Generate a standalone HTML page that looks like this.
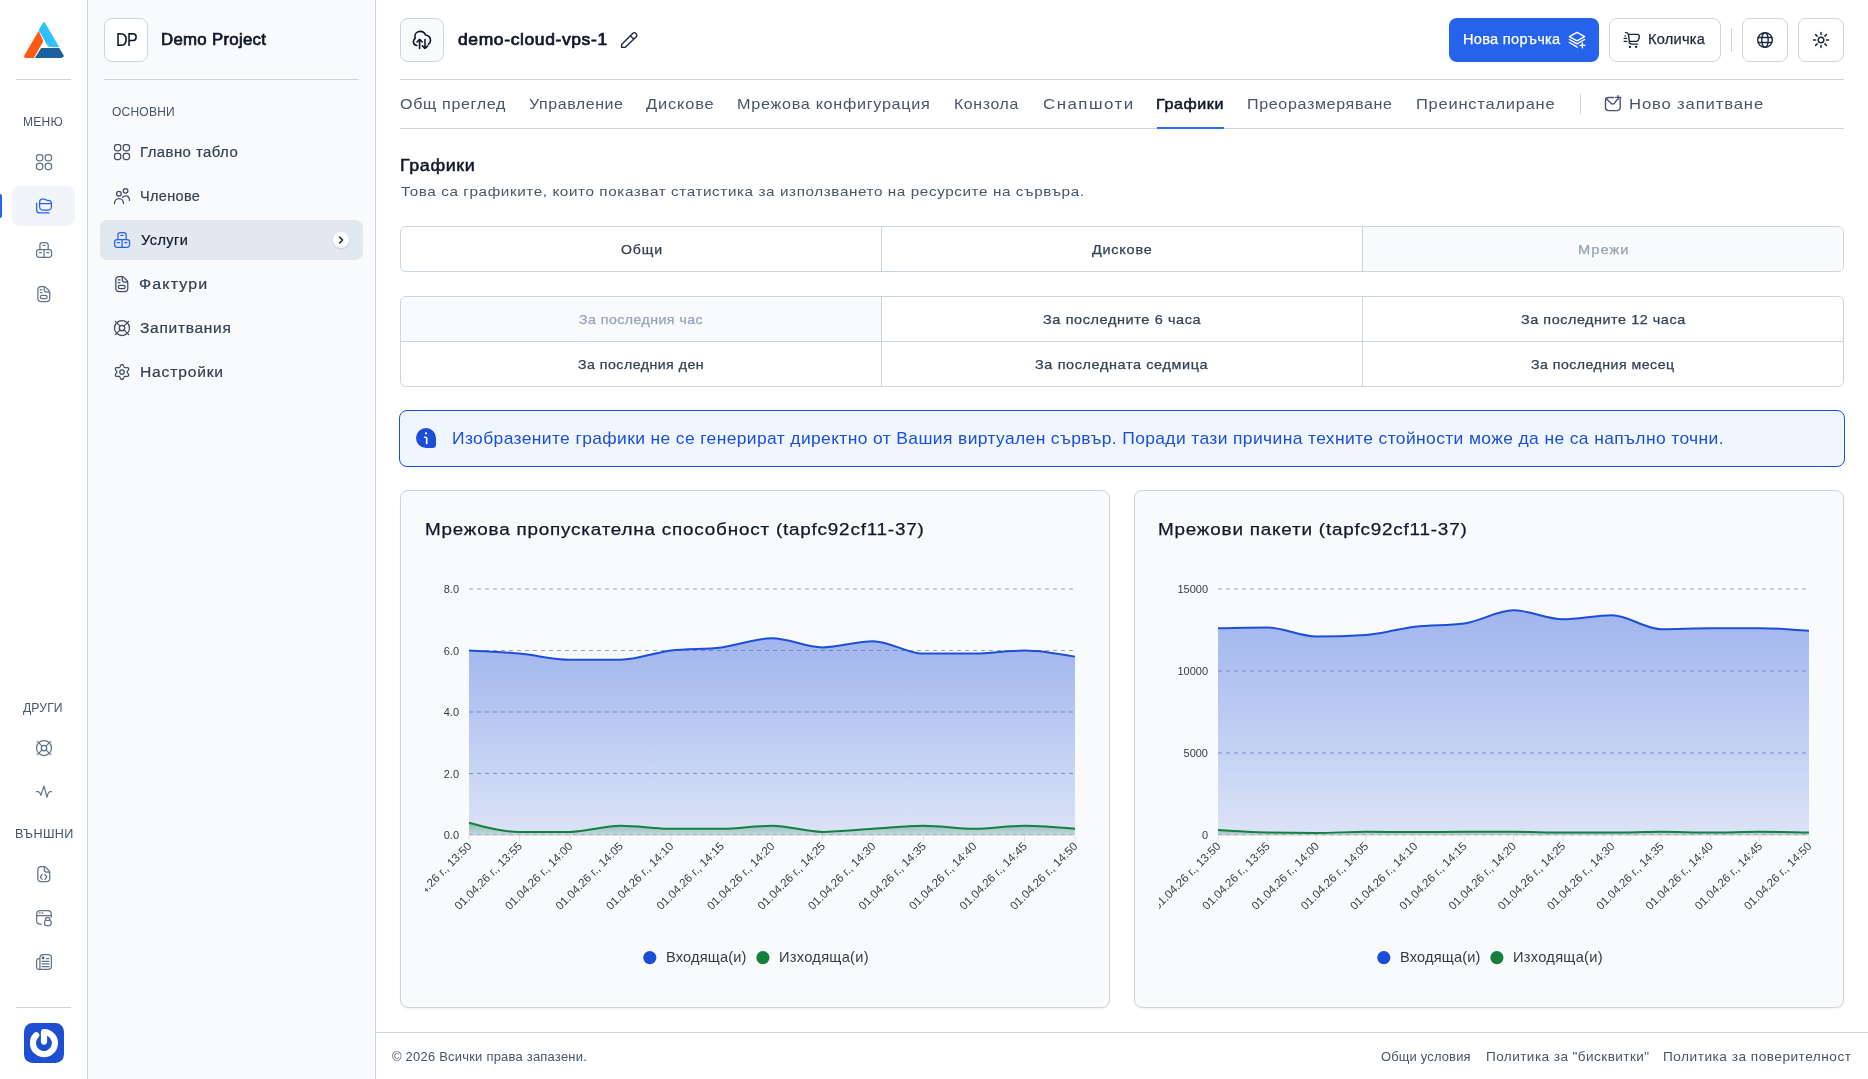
<!DOCTYPE html>
<html lang="bg">
<head>
<meta charset="utf-8">
<title>demo-cloud-vps-1 - Графики</title>
<style>
*{box-sizing:border-box;margin:0;padding:0}
html,body{width:1868px;height:1079px;overflow:hidden;background:#fff}
body{font-family:"Liberation Sans",sans-serif;color:#334155;position:relative;font-size:15px}
.abs{position:absolute}
svg{display:block}
.ic{fill:none;stroke:#475569;stroke-width:1.5;stroke-linecap:round;stroke-linejoin:round}
#texts{position:absolute;left:0;top:0;width:1868px;height:1079px;will-change:transform}
.t{position:absolute;white-space:pre;line-height:1;transform-origin:0 50%}

/* rail */
#rail{position:absolute;left:0;top:0;width:88px;height:1079px;background:#fff;border-right:1px solid #cbd5e1}
.rdiv{position:absolute;left:16px;width:55px;height:1px;background:#cbd5e1}
.rlabel{position:absolute;left:0;width:87px;text-align:center;font-size:12px;color:#475569;line-height:14px;letter-spacing:.2px}
.ricon{position:absolute;left:33.5px;width:20px;height:20px}
.ractive{position:absolute;left:12px;top:186px;width:63px;height:40px;background:#f1f5f9;border-radius:8px}
.rbar{position:absolute;left:0;top:194px;width:2px;height:24px;background:#2563eb;border-radius:0 2px 2px 0}

/* sidebar */
#side{position:absolute;left:88px;top:0;width:288px;height:1079px;background:#f8fafc;border-right:1px solid #cbd5e1}
.sitem{position:absolute;left:12px;width:263px;height:40px;border-radius:8px}
.sitem svg{position:absolute;left:12px;top:10px;width:20px;height:20px}
.sitem span{position:absolute;left:40px;top:0;line-height:40px;font-size:15px;color:#334155;white-space:nowrap}

/* main */
#main{position:absolute;left:376px;top:0;width:1492px;height:1079px;background:#fff}
.box44{position:absolute;width:44px;height:44px;border:1px solid #cbd5e1;border-radius:8px;background:#fff}
.hdiv{position:absolute;height:1px;background:#cbd5e1}
.tab{position:absolute;top:94px;font-size:16px;line-height:20px;color:#475569;white-space:nowrap}
.seg{position:absolute;border:1px solid #cbd5e1;border-radius:6px;background:#fff;overflow:hidden}
.seg div{position:absolute;text-align:center;font-size:14px;color:#334155;font-weight:500;white-space:nowrap}
.card{position:absolute;top:490px;width:710px;height:518px;background:#f8fafc;border:1px solid #cbd5e1;border-radius:8px;box-shadow:0 1px 2px rgba(15,23,42,.05)}
.ctitle{position:absolute;left:24px;top:27px;font-size:18px;line-height:22px;color:#0f172a;white-space:nowrap}
.foot{position:absolute;top:1049px;font-size:13px;line-height:16px;color:#475569;white-space:nowrap}
</style>
</head>
<body>

<!-- ================= ICON RAIL ================= -->
<div id="rail">
  <svg class="abs" style="left:19px;top:15px;width:50px;height:50px" viewBox="0 0 50 50">
<path d="M19.7 15.8 L24 25.6 Q24.3 26.5 23.8 27.3 L14.8 42.9 L7 42.9 Q4.4 42.7 5.3 40.4 Z" fill="#ff5a12"/>
<path d="M24.2 7.6 Q25 6.4 25.8 7.6 L40.3 32.3 L31 31.9 Q29 31.8 28.2 30.2 L20 15.6 Q19.7 14.8 20.1 14.2 Z" fill="#2ec0ff"/>
<path d="M22.2 33 L40.3 33 L44.6 40.3 Q45.2 41.4 44.2 42.1 Q43.4 42.9 42.5 42.9 L15.8 42.9 Z" fill="#1c619e"/>
</svg>
  <div class="rdiv" style="top:79px"></div>
  <div class="ractive"></div><div class="rbar"></div>
  <svg class="ricon ic" style="top:152px;stroke:#64748b" viewBox="0 0 24 24"><rect x="3" y="3" width="7.5" height="7.5" rx="2.6"/><rect x="13.5" y="3" width="7.5" height="7.5" rx="2.6"/><rect x="3" y="13.5" width="7.5" height="7.5" rx="2.6"/><rect x="13.5" y="13.5" width="7.5" height="7.5" rx="2.6"/></svg>
<svg class="ricon ic" style="top:196px;stroke:#2563eb" viewBox="0 0 24 24"><path d="M3.2 8.5 V16.7 a3.6 3.6 0 0 0 3.6 3.6 H18"/><path d="M6.7 9 H20.9"/><path d="M6.7 7.4 a3.6 3.6 0 0 1 3.6 -3.6 h2.1 c1.5 0 2.1 1.4 3.6 1.4 h1.4 a3.5 3.5 0 0 1 3.5 3.5 V13.3 a3.5 3.5 0 0 1 -3.5 3.5 H10.2 a3.5 3.5 0 0 1 -3.5 -3.5 Z"/></svg>
<svg class="ricon ic" style="top:240px;stroke:#64748b" viewBox="0 0 24 24"><path d="M7.1 11.5 V6.1 a3 3 0 0 1 3 -3 h3.9 a3 3 0 0 1 3 3 V11.5"/><rect x="3.1" y="11.5" width="18" height="9.3" rx="3"/><path d="M12.1 11.5 V20.8 M10.8 6.5 h2.5 M6.4 15 h2.5 M15.4 15 h2.5"/></svg>
<svg class="ricon ic" style="top:284px;stroke:#64748b" viewBox="0 0 24 24"><path d="M4.6 7 a4 4 0 0 1 4 -4 h3 c1 0 1.8 .4 2.5 1.1 l3.7 3.7 c.7 .7 1.1 1.5 1.1 2.5 V17 a4 4 0 0 1 -4 4 H8.6 a4 4 0 0 1 -4 -4 Z"/><path d="M12.4 3.3 V7.3 a2.5 2.5 0 0 0 2.5 2.5 h3.7"/><path d="M7.4 7.1 h2.2 M7.4 10.3 h2.2"/><rect x="7.7" y="13.6" width="8" height="4" rx="1.6"/></svg>
<svg class="ricon ic" style="top:738px;stroke:#64748b" viewBox="0 0 24 24"><circle cx="12" cy="12" r="9"/><circle cx="12" cy="12" r="3.3"/><path d="M4 4 L9.7 9.7 M20 4 L14.3 9.7 M4 20 L9.7 14.3 M20 20 L14.3 14.3"/></svg>
<svg class="ricon ic" style="top:782px;stroke:#64748b" viewBox="0 0 24 24"><path d="M3 11.5 h1.8 c1.6 0 2.3 1 2.7 2.5 l.7 2.1 L12 5 l3.6 13.5 l1 -4 c.5 -1.8 1.2 -3 2.8 -3 h1.5"/></svg>
<svg class="ricon ic" style="top:864px;stroke:#64748b" viewBox="0 0 24 24"><path d="M4.6 7 a4 4 0 0 1 4 -4 h3 c1 0 1.8 .4 2.5 1.1 l3.7 3.7 c.7 .7 1.1 1.5 1.1 2.5 V17 a4 4 0 0 1 -4 4 H8.6 a4 4 0 0 1 -4 -4 Z"/><path d="M12.4 3.3 V7.3 a2.5 2.5 0 0 0 2.5 2.5 h3.7"/><path d="M9.7 12.6 L7.5 15.5 L9.7 18.4 M13.1 12.6 L15.5 15.5 L13.1 18.4"/></svg>
<svg class="ricon ic" style="top:908px;stroke:#64748b" viewBox="0 0 24 24"><path d="M8.9 19.3 H7.2 a4 4 0 0 1 -4 -4 V7.1 a4 4 0 0 1 4 -4 H16.7 a4 4 0 0 1 4 4 V10.8"/><path d="M3.2 9 H20.7"/><path d="M6.7 6 h.5 M9.9 6 h.5" stroke-width="1.9"/><rect x="12.6" y="14.8" width="8" height="6.2" rx="2.4"/><path d="M13.7 14.8 V14 a2.8 2.8 0 0 1 5.6 0 v.8"/></svg>
<svg class="ricon ic" style="top:952px;stroke:#64748b" viewBox="0 0 24 24"><path d="M7.1 20.8 V7 a4 4 0 0 1 4 -4 h5.8 a4 4 0 0 1 4 4 v9.8 a4 4 0 0 1 -4 4 H5.3 a2.2 2.2 0 0 1 -2.2 -2.2 V10.8 a3 3 0 0 1 3 -3 h1"/><rect x="9.7" y="5.9" width="2.4" height="2.4" rx=".7" fill="currentColor" stroke-width="1"/><path d="M14.8 7.8 h3.2 M9.6 11.3 h8.4 M9.6 14.3 h8.4 M9.6 17.5 h8.4"/></svg>


  <div class="rdiv" style="top:1007px"></div>
  <svg class="abs" style="left:24px;top:1023px;width:40px;height:40px" viewBox="0 0 40 40">
<rect width="40" height="40" rx="8.5" fill="#1d4fd0"/>
<path d="M20 18.6 V9.1 A11 11 0 1 1 12.2 12.3" fill="none" stroke="#fff" stroke-width="6.2" stroke-linecap="round" stroke-linejoin="round"/>
</svg>
</div>

<!-- ================= SIDEBAR ================= -->
<div id="side">
  <div class="box44" style="left:16px;top:18px"></div>
  <div class="hdiv" style="left:16px;top:79px;width:255px"></div>
  <div class="sitem" style="top:132px;"><svg class="ic" style="stroke:#3f4c62" viewBox="0 0 24 24"><rect x="3" y="3" width="7.5" height="7.5" rx="2.6"/><rect x="13.5" y="3" width="7.5" height="7.5" rx="2.6"/><rect x="3" y="13.5" width="7.5" height="7.5" rx="2.6"/><rect x="13.5" y="13.5" width="7.5" height="7.5" rx="2.6"/></svg></div>
<div class="sitem" style="top:176px;"><svg class="ic" style="stroke:#3f4c62" viewBox="0 0 24 24"><circle cx="8.3" cy="9.2" r="2.8"/><path d="M3 21 a5.4 6 0 0 1 10.8 0"/><circle cx="16.3" cy="5.8" r="2.8"/><path d="M12.5 13.5 c1 -1 2.3 -1.6 3.8 -1.6 c3 0 4.7 2.4 4.7 5.4"/></svg></div>
<div class="sitem" style="top:220px;background:#e2e8f0;"><svg class="ic" style="stroke:#2563eb" viewBox="0 0 24 24"><path d="M7.1 11.5 V6.1 a3 3 0 0 1 3 -3 h3.9 a3 3 0 0 1 3 3 V11.5"/><rect x="3.1" y="11.5" width="18" height="9.3" rx="3"/><path d="M12.1 11.5 V20.8 M10.8 6.5 h2.5 M6.4 15 h2.5 M15.4 15 h2.5"/></svg><div class="abs" style="left:233px;top:12px;width:16px;height:16px;border-radius:8px;background:#fff;box-shadow:0 1px 2px rgba(15,23,42,.15)"><svg viewBox="0 0 16 16" style="width:16px;height:16px;position:static" fill="none" stroke="#0f172a" stroke-width="1.4" stroke-linecap="round" stroke-linejoin="round"><path d="M6.6 5 L9.6 8 L6.6 11"/></svg></div></div>
<div class="sitem" style="top:264px;"><svg class="ic" style="stroke:#3f4c62" viewBox="0 0 24 24"><path d="M4.6 7 a4 4 0 0 1 4 -4 h3 c1 0 1.8 .4 2.5 1.1 l3.7 3.7 c.7 .7 1.1 1.5 1.1 2.5 V17 a4 4 0 0 1 -4 4 H8.6 a4 4 0 0 1 -4 -4 Z"/><path d="M12.4 3.3 V7.3 a2.5 2.5 0 0 0 2.5 2.5 h3.7"/><path d="M7.4 7.1 h2.2 M7.4 10.3 h2.2"/><rect x="7.7" y="13.6" width="8" height="4" rx="1.6"/></svg></div>
<div class="sitem" style="top:308px;"><svg class="ic" style="stroke:#3f4c62" viewBox="0 0 24 24"><circle cx="12" cy="12" r="9"/><circle cx="12" cy="12" r="3.3"/><path d="M4 4 L9.7 9.7 M20 4 L14.3 9.7 M4 20 L9.7 14.3 M20 20 L14.3 14.3"/></svg></div>
<div class="sitem" style="top:352px;"><svg class="ic" style="stroke:#3f4c62" viewBox="0 0 24 24"><path d="M18.10 12.00 L18.14 12.27 L18.27 12.55 L18.47 12.85 L18.72 13.19 L19.00 13.55 L19.29 13.95 L19.56 14.38 L19.78 14.83 L19.92 15.28 L19.98 15.72 L19.94 16.13 L19.79 16.50 L19.55 16.81 L19.21 17.05 L18.80 17.22 L18.34 17.32 L17.84 17.35 L17.34 17.34 L16.85 17.29 L16.39 17.23 L15.97 17.18 L15.61 17.16 L15.30 17.19 L15.05 17.28 L14.84 17.45 L14.66 17.70 L14.50 18.03 L14.33 18.41 L14.16 18.84 L13.95 19.29 L13.72 19.74 L13.44 20.15 L13.12 20.50 L12.77 20.77 L12.39 20.94 L12.00 21.00 L11.61 20.94 L11.23 20.77 L10.88 20.50 L10.56 20.15 L10.28 19.74 L10.05 19.29 L9.84 18.84 L9.67 18.41 L9.50 18.03 L9.34 17.70 L9.16 17.45 L8.95 17.28 L8.70 17.19 L8.39 17.16 L8.03 17.18 L7.61 17.23 L7.15 17.29 L6.66 17.34 L6.16 17.35 L5.66 17.32 L5.20 17.22 L4.79 17.05 L4.45 16.81 L4.21 16.50 L4.06 16.13 L4.02 15.72 L4.08 15.28 L4.22 14.83 L4.44 14.38 L4.71 13.95 L5.00 13.55 L5.28 13.19 L5.53 12.85 L5.73 12.55 L5.86 12.27 L5.90 12.00 L5.86 11.73 L5.73 11.45 L5.53 11.15 L5.28 10.81 L5.00 10.45 L4.71 10.05 L4.44 9.62 L4.22 9.17 L4.08 8.72 L4.02 8.28 L4.06 7.87 L4.21 7.50 L4.45 7.19 L4.79 6.95 L5.20 6.78 L5.66 6.68 L6.16 6.65 L6.66 6.66 L7.15 6.71 L7.61 6.77 L8.03 6.82 L8.39 6.84 L8.70 6.81 L8.95 6.72 L9.16 6.55 L9.34 6.30 L9.50 5.97 L9.67 5.59 L9.84 5.16 L10.05 4.71 L10.28 4.26 L10.56 3.85 L10.88 3.50 L11.23 3.23 L11.61 3.06 L12.00 3.00 L12.39 3.06 L12.77 3.23 L13.12 3.50 L13.44 3.85 L13.72 4.26 L13.95 4.71 L14.16 5.16 L14.33 5.59 L14.50 5.97 L14.66 6.30 L14.84 6.55 L15.05 6.72 L15.30 6.81 L15.61 6.84 L15.97 6.82 L16.39 6.77 L16.85 6.71 L17.34 6.66 L17.84 6.65 L18.34 6.68 L18.80 6.78 L19.21 6.95 L19.55 7.19 L19.79 7.50 L19.94 7.87 L19.98 8.28 L19.92 8.72 L19.78 9.17 L19.56 9.62 L19.29 10.05 L19.00 10.45 L18.72 10.81 L18.47 11.15 L18.27 11.45 L18.14 11.73 Z"/><circle cx="12" cy="12" r="2.7"/></svg></div>

</div>

<!-- ================= MAIN ================= -->
<div id="main">
  <!-- header -->
<div class="box44" style="left:24px;top:18px;background:#f8fafc"></div>
<svg class="abs" style="left:26px;top:20px;width:40px;height:40px" viewBox="0 0 40 40" fill="none" stroke="#0f172a" stroke-width="1.6" stroke-linecap="round" stroke-linejoin="round">
  <path d="M14.8 25.5 C12.8 25 11.4 23.6 11.4 21.7 C11.4 20.3 12.1 19.2 13.2 18.4 C13 17.7 12.9 17 12.9 16.4 C12.9 13.6 15.2 11.4 18.2 11.4 C20.6 11.4 22.6 12.8 23.5 15 C26.4 15.5 28.5 17.6 28.5 20.4 C28.5 22 27.7 23.4 26.4 24.2"/>
  <path d="M17.6 28.4 V19.6 M15 22 L17.6 19.4 L20.3 22 M23 19.5 V28.3 M20.3 25.9 L23 28.5 L25.6 25.9"/>
</svg>
<svg class="abs" style="left:233px;top:20px;width:40px;height:40px" viewBox="0 0 40 40" fill="none" stroke="#1e293b" stroke-width="1.4" stroke-linecap="round" stroke-linejoin="round">
  <path d="M12.6 27.4 V24.6 L23.9 13.3 a2 2 0 0 1 2.8 0 l.6 .6 a2 2 0 0 1 0 2.8 L16 27.4 Z M21.4 15.8 L24.3 18.7"/>
</svg>

<!-- buttons -->
<div class="abs" style="left:1073px;top:18px;width:150px;height:44px;border-radius:8px;background:#2563eb"></div>
<svg class="abs" style="left:1181px;top:20px;width:40px;height:40px" viewBox="0 0 40 40" fill="none" stroke="#fff" stroke-width="1.4" stroke-linecap="round" stroke-linejoin="round">
  <path d="M12.4 16.7 L20 12.4 L27.6 16.7 L20 20.9 Z M12.4 19.5 L20 23.8 L27.6 19.5 M12.4 22.5 L20.2 27.2 M22.9 25.4 h5 M25.4 22.9 v5"/>
</svg>
<div class="abs" style="left:1233px;top:18px;width:112px;height:44px;border-radius:8px;border:1px solid #cbd5e1;background:#fff"></div>
<svg class="abs" style="left:1236px;top:20px;width:40px;height:40px" viewBox="0 0 40 40" fill="none" stroke="#1e293b" stroke-width="1.4" stroke-linecap="round" stroke-linejoin="round">
  <path d="M13.5 12.6 h.6 c1.2 0 2 .7 2.3 1.8 L17.4 21.3 M16.6 14.4 H25.4 a2 2 0 0 1 2 2.4 l-.9 3 a2.4 2.4 0 0 1 -2.3 1.6 H17.8 c-.9 0 -.9 1.2 -.2 1.7 c.6 .6 1.2 1 2.1 1 H25.6"/>
  <circle cx="18" cy="26.9" r="1.15" fill="#0f172a" stroke="none"/><circle cx="24.1" cy="26.9" r="1.15" fill="#0f172a" stroke="none"/>
  <path d="M13 15.9 h.4 M12.2 18.4 h2.4 M12.2 21.4 h2.6"/>
</svg>
<div class="abs" style="left:1355px;top:28px;width:1px;height:24px;background:#cbd5e1"></div>
<div class="box44" style="left:1366px;top:18px;width:46px"></div>
<svg class="abs" style="left:1369px;top:20px;width:40px;height:40px" viewBox="0 0 40 40" fill="none" stroke="#1e293b" stroke-width="1.4" stroke-linecap="round" stroke-linejoin="round">
  <circle cx="20" cy="20" r="7.3"/><ellipse cx="20" cy="20" rx="3.2" ry="7.3"/><path d="M13.3 17.5 H26.7 M13.3 22.5 H26.7"/>
</svg>
<div class="box44" style="left:1422px;top:18px;width:46px"></div>
<svg class="abs" style="left:1425px;top:20px;width:40px;height:40px" viewBox="0 0 40 40" fill="none" stroke="#1e293b" stroke-width="1.5" stroke-linecap="round" stroke-linejoin="round">
  <circle cx="20" cy="20" r="2.8"/>
  <path d="M20 12.4 v2.2 M20 25.4 v2.2 M12.4 20 h2.2 M25.4 20 h2.2 M14.6 14.6 l1.5 1.5 M23.9 23.9 l1.5 1.5 M25.4 14.6 l-1.5 1.5 M16.1 23.9 l-1.5 1.5"/>
</svg>
<div class="hdiv" style="left:24px;top:79px;width:1444px"></div>

  <!-- tabs -->
<div class="abs" style="left:1204px;top:94px;width:1px;height:20px;background:#cbd5e1"></div>
<svg class="abs" style="left:1217px;top:84px;width:40px;height:40px" viewBox="0 0 40 40" fill="none" stroke="#475569" stroke-width="1.4" stroke-linecap="round" stroke-linejoin="round">
  <path d="M20.6 13.5 H15.6 a3.1 3.1 0 0 0 -3.1 3.1 V23.5 a3.1 3.1 0 0 0 3.1 3.1 H24.1 a3.1 3.1 0 0 0 3.1 -3.1 V14.4"/>
  <path d="M12.9 14.2 L18 19.2 a2.4 2.4 0 0 0 3.5 0 L24.4 15.3"/>
  <path d="M22.5 13.4 h5.2 M25.1 11.6 v3.6"/>
</svg>
<div class="hdiv" style="left:24px;top:128px;width:1444px"></div>
<div class="abs" style="left:781px;top:127px;width:67px;height:2px;background:#2570f0"></div>

  <!-- section -->

<div class="seg" style="left:24px;top:226px;width:1444px;height:46px">
  <div style="left:0;top:0;width:480px;height:44px;line-height:44px"></div>
  <div style="left:480px;top:0;width:482px;height:44px;line-height:44px;border-left:1px solid #cbd5e1;border-right:1px solid #cbd5e1"></div>
  <div style="left:962px;top:0;width:480px;height:44px;line-height:44px;background:#f8fafc;color:#94a3b8"></div>
</div>

<div class="seg" style="left:24px;top:296px;width:1444px;height:91px">
  <div style="left:0;top:0;width:480px;height:44px;line-height:44px;background:#f8fafc;color:#94a3b8"></div>
  <div style="left:480px;top:0;width:482px;height:44px;line-height:44px;border-left:1px solid #cbd5e1;border-right:1px solid #cbd5e1"></div>
  <div style="left:962px;top:0;width:480px;height:44px;line-height:44px"></div>
  <div style="left:0;top:44px;width:1442px;height:1px;background:#cbd5e1"></div>
  <div style="left:0;top:45px;width:480px;height:44px;line-height:44px"></div>
  <div style="left:480px;top:45px;width:482px;height:44px;line-height:44px;border-left:1px solid #cbd5e1;border-right:1px solid #cbd5e1"></div>
  <div style="left:962px;top:45px;width:480px;height:44px;line-height:44px"></div>
</div>

<div class="abs" style="left:23px;top:410px;width:1446px;height:57px;border:1px solid #1d4ed8;border-radius:8px;background:#eff6ff"></div>
<svg class="abs" style="left:30px;top:418px;width:40px;height:40px" viewBox="0 0 40 40">
  <path d="M20 10 a10 10 0 0 1 10 10 v6.5 a3.5 3.5 0 0 1 -3.5 3.5 H20 a10 10 0 0 1 0 -20 Z" fill="#1d4ed8"/>
  <circle cx="20" cy="15.3" r="1.15" fill="#fff"/>
  <path d="M18.6 19.2 h1.1 a1 1 0 0 1 1 1 V25.5" fill="none" stroke="#fff" stroke-width="1.6" stroke-linecap="round" stroke-linejoin="round"/>
</svg>

  <div class="card" style="left:24px">
<svg class="abs" style="left:-1px;top:-1px;will-change:transform" width="710" height="518" viewBox="0 0 710 518" font-family="Liberation Sans, sans-serif">
<defs><linearGradient id="gba" x1="0" y1="0" x2="0" y2="1"><stop offset="0" stop-color="#1d4ed8" stop-opacity=".40"/><stop offset="1" stop-color="#1d4ed8" stop-opacity=".13"/></linearGradient>
<linearGradient id="gga" x1="0" y1="0" x2="0" y2="1"><stop offset="0" stop-color="#15803d" stop-opacity=".38"/><stop offset="1" stop-color="#15803d" stop-opacity=".12"/></linearGradient>
<clipPath id="cla"><rect x="25" y="0" width="685" height="518"/></clipPath></defs>
<line x1="69" y1="99.0" x2="675" y2="99.0" stroke="#94a3b8" stroke-width="1" stroke-dasharray="4 4"/>
<line x1="69" y1="160.5" x2="675" y2="160.5" stroke="#94a3b8" stroke-width="1" stroke-dasharray="4 4"/>
<line x1="69" y1="222.0" x2="675" y2="222.0" stroke="#94a3b8" stroke-width="1" stroke-dasharray="4 4"/>
<line x1="69" y1="283.5" x2="675" y2="283.5" stroke="#94a3b8" stroke-width="1" stroke-dasharray="4 4"/>
<line x1="69" y1="345.0" x2="675" y2="345.0" stroke="#94a3b8" stroke-width="1" stroke-dasharray="4 4"/>
<path d="M69.00 160.50 C85.83 161.27 102.67 162.04 119.50 163.57 C136.33 165.11 153.17 169.72 170.00 169.72 C186.83 169.72 203.67 169.72 220.50 169.72 C237.33 169.72 254.17 162.55 271.00 160.50 C287.83 158.45 304.67 159.47 321.50 157.43 C338.33 155.38 355.17 148.20 372.00 148.20 C388.83 148.20 405.67 157.43 422.50 157.43 C439.33 157.43 456.17 151.28 473.00 151.28 C489.83 151.28 506.67 163.57 523.50 163.57 C540.33 163.57 557.17 163.57 574.00 163.57 C590.83 163.57 607.67 160.50 624.50 160.50 C641.33 160.50 658.17 163.58 675.00 166.65 L675.00 345 L69.00 345 Z" fill="url(#gba)"/>
<path d="M69.00 332.70 C85.83 337.31 102.67 341.93 119.50 341.93 C136.33 341.93 153.17 341.93 170.00 341.93 C186.83 341.93 203.67 335.77 220.50 335.77 C237.33 335.77 254.17 338.85 271.00 338.85 C287.83 338.85 304.67 338.85 321.50 338.85 C338.33 338.85 355.17 335.77 372.00 335.77 C388.83 335.77 405.67 341.93 422.50 341.93 C439.33 341.93 456.17 339.88 473.00 338.85 C489.83 337.83 506.67 335.77 523.50 335.77 C540.33 335.77 557.17 338.85 574.00 338.85 C590.83 338.85 607.67 335.77 624.50 335.77 C641.33 335.77 658.17 337.31 675.00 338.85 L675.00 345 L69.00 345 Z" fill="url(#gga)"/>
<path d="M69.00 160.50 C85.83 161.27 102.67 162.04 119.50 163.57 C136.33 165.11 153.17 169.72 170.00 169.72 C186.83 169.72 203.67 169.72 220.50 169.72 C237.33 169.72 254.17 162.55 271.00 160.50 C287.83 158.45 304.67 159.47 321.50 157.43 C338.33 155.38 355.17 148.20 372.00 148.20 C388.83 148.20 405.67 157.43 422.50 157.43 C439.33 157.43 456.17 151.28 473.00 151.28 C489.83 151.28 506.67 163.57 523.50 163.57 C540.33 163.57 557.17 163.57 574.00 163.57 C590.83 163.57 607.67 160.50 624.50 160.50 C641.33 160.50 658.17 163.58 675.00 166.65" fill="none" stroke="#1d4ed8" stroke-width="2" stroke-linecap="butt"/>
<path d="M69.00 332.70 C85.83 337.31 102.67 341.93 119.50 341.93 C136.33 341.93 153.17 341.93 170.00 341.93 C186.83 341.93 203.67 335.77 220.50 335.77 C237.33 335.77 254.17 338.85 271.00 338.85 C287.83 338.85 304.67 338.85 321.50 338.85 C338.33 338.85 355.17 335.77 372.00 335.77 C388.83 335.77 405.67 341.93 422.50 341.93 C439.33 341.93 456.17 339.88 473.00 338.85 C489.83 337.83 506.67 335.77 523.50 335.77 C540.33 335.77 557.17 338.85 574.00 338.85 C590.83 338.85 607.67 335.77 624.50 335.77 C641.33 335.77 658.17 337.31 675.00 338.85" fill="none" stroke="#15803d" stroke-width="2" stroke-linecap="butt"/>
<line x1="69" y1="345.5" x2="675" y2="345.5" stroke="#e0e0e0" stroke-width="1"/>
<line x1="69.0" y1="346" x2="69.0" y2="351" stroke="#e0e0e0" stroke-width="1"/>
<line x1="119.5" y1="346" x2="119.5" y2="351" stroke="#e0e0e0" stroke-width="1"/>
<line x1="170.0" y1="346" x2="170.0" y2="351" stroke="#e0e0e0" stroke-width="1"/>
<line x1="220.5" y1="346" x2="220.5" y2="351" stroke="#e0e0e0" stroke-width="1"/>
<line x1="271.0" y1="346" x2="271.0" y2="351" stroke="#e0e0e0" stroke-width="1"/>
<line x1="321.5" y1="346" x2="321.5" y2="351" stroke="#e0e0e0" stroke-width="1"/>
<line x1="372.0" y1="346" x2="372.0" y2="351" stroke="#e0e0e0" stroke-width="1"/>
<line x1="422.5" y1="346" x2="422.5" y2="351" stroke="#e0e0e0" stroke-width="1"/>
<line x1="473.0" y1="346" x2="473.0" y2="351" stroke="#e0e0e0" stroke-width="1"/>
<line x1="523.5" y1="346" x2="523.5" y2="351" stroke="#e0e0e0" stroke-width="1"/>
<line x1="574.0" y1="346" x2="574.0" y2="351" stroke="#e0e0e0" stroke-width="1"/>
<line x1="624.5" y1="346" x2="624.5" y2="351" stroke="#e0e0e0" stroke-width="1"/>
<line x1="675.0" y1="346" x2="675.0" y2="351" stroke="#e0e0e0" stroke-width="1"/>
<text class="yl" x="59" y="103.0" text-anchor="end" font-size="11" fill="#373d3f">8.0</text>
<text class="yl" x="59" y="164.5" text-anchor="end" font-size="11" fill="#373d3f">6.0</text>
<text class="yl" x="59" y="226.0" text-anchor="end" font-size="11" fill="#373d3f">4.0</text>
<text class="yl" x="59" y="287.5" text-anchor="end" font-size="11" fill="#373d3f">2.0</text>
<text class="yl" x="59" y="349.0" text-anchor="end" font-size="11" fill="#373d3f">0.0</text>
<g clip-path="url(#cla)">
<text class="xl" transform="translate(72.3 357) rotate(-45)" text-anchor="end" font-size="11.6" fill="#373d3f">01.04.26 г., 13:50</text>
<text class="xl" transform="translate(122.8 357) rotate(-45)" text-anchor="end" font-size="11.6" fill="#373d3f">01.04.26 г., 13:55</text>
<text class="xl" transform="translate(173.3 357) rotate(-45)" text-anchor="end" font-size="11.6" fill="#373d3f">01.04.26 г., 14:00</text>
<text class="xl" transform="translate(223.8 357) rotate(-45)" text-anchor="end" font-size="11.6" fill="#373d3f">01.04.26 г., 14:05</text>
<text class="xl" transform="translate(274.3 357) rotate(-45)" text-anchor="end" font-size="11.6" fill="#373d3f">01.04.26 г., 14:10</text>
<text class="xl" transform="translate(324.8 357) rotate(-45)" text-anchor="end" font-size="11.6" fill="#373d3f">01.04.26 г., 14:15</text>
<text class="xl" transform="translate(375.3 357) rotate(-45)" text-anchor="end" font-size="11.6" fill="#373d3f">01.04.26 г., 14:20</text>
<text class="xl" transform="translate(425.8 357) rotate(-45)" text-anchor="end" font-size="11.6" fill="#373d3f">01.04.26 г., 14:25</text>
<text class="xl" transform="translate(476.3 357) rotate(-45)" text-anchor="end" font-size="11.6" fill="#373d3f">01.04.26 г., 14:30</text>
<text class="xl" transform="translate(526.8 357) rotate(-45)" text-anchor="end" font-size="11.6" fill="#373d3f">01.04.26 г., 14:35</text>
<text class="xl" transform="translate(577.3 357) rotate(-45)" text-anchor="end" font-size="11.6" fill="#373d3f">01.04.26 г., 14:40</text>
<text class="xl" transform="translate(627.8 357) rotate(-45)" text-anchor="end" font-size="11.6" fill="#373d3f">01.04.26 г., 14:45</text>
<text class="xl" transform="translate(678.3 357) rotate(-45)" text-anchor="end" font-size="11.6" fill="#373d3f">01.04.26 г., 14:50</text>
</g>
<circle cx="249.8" cy="467.6" r="6.6" fill="#1d4ed8"/>
<circle cx="362.9" cy="467.6" r="6.6" fill="#15803d"/>
</svg></div>
<div class="card" style="left:758px">
<svg class="abs" style="left:-1px;top:-1px;will-change:transform" width="710" height="518" viewBox="0 0 710 518" font-family="Liberation Sans, sans-serif">
<defs><linearGradient id="gbb" x1="0" y1="0" x2="0" y2="1"><stop offset="0" stop-color="#1d4ed8" stop-opacity=".40"/><stop offset="1" stop-color="#1d4ed8" stop-opacity=".13"/></linearGradient>
<linearGradient id="ggb" x1="0" y1="0" x2="0" y2="1"><stop offset="0" stop-color="#15803d" stop-opacity=".38"/><stop offset="1" stop-color="#15803d" stop-opacity=".12"/></linearGradient>
<clipPath id="clb"><rect x="25" y="0" width="685" height="518"/></clipPath></defs>
<line x1="84" y1="99.0" x2="675" y2="99.0" stroke="#94a3b8" stroke-width="1" stroke-dasharray="4 4"/>
<line x1="84" y1="181.0" x2="675" y2="181.0" stroke="#94a3b8" stroke-width="1" stroke-dasharray="4 4"/>
<line x1="84" y1="263.0" x2="675" y2="263.0" stroke="#94a3b8" stroke-width="1" stroke-dasharray="4 4"/>
<line x1="84" y1="345.0" x2="675" y2="345.0" stroke="#94a3b8" stroke-width="1" stroke-dasharray="4 4"/>
<path d="M84.00 138.36 C100.42 137.95 116.83 137.54 133.25 137.54 C149.67 137.54 166.08 146.56 182.50 146.56 C198.92 146.56 215.33 146.01 231.75 144.92 C248.17 143.83 264.58 138.63 281.00 136.72 C297.42 134.81 313.83 135.63 330.25 133.44 C346.67 131.25 363.08 120.32 379.50 120.32 C395.92 120.32 412.33 129.34 428.75 129.34 C445.17 129.34 461.58 125.24 478.00 125.24 C494.42 125.24 510.83 139.18 527.25 139.18 C543.67 139.18 560.08 138.36 576.50 138.36 C592.92 138.36 609.33 138.36 625.75 138.36 C642.17 138.36 658.58 139.59 675.00 140.82 L675.00 345 L84.00 345 Z" fill="url(#gbb)"/>
<path d="M84.00 340.08 C100.42 341.15 116.83 342.21 133.25 342.54 C149.67 342.87 166.08 343.03 182.50 343.03 C198.92 343.03 215.33 341.72 231.75 341.72 C248.17 341.72 264.58 342.05 281.00 342.05 C297.42 342.05 313.83 341.72 330.25 341.72 C346.67 341.72 363.08 341.72 379.50 341.72 C395.92 341.72 412.33 342.54 428.75 342.54 C445.17 342.54 461.58 342.54 478.00 342.54 C494.42 342.54 510.83 341.72 527.25 341.72 C543.67 341.72 560.08 342.54 576.50 342.54 C592.92 342.54 609.33 341.72 625.75 341.72 C642.17 341.72 658.58 342.13 675.00 342.54 L675.00 345 L84.00 345 Z" fill="url(#ggb)"/>
<path d="M84.00 138.36 C100.42 137.95 116.83 137.54 133.25 137.54 C149.67 137.54 166.08 146.56 182.50 146.56 C198.92 146.56 215.33 146.01 231.75 144.92 C248.17 143.83 264.58 138.63 281.00 136.72 C297.42 134.81 313.83 135.63 330.25 133.44 C346.67 131.25 363.08 120.32 379.50 120.32 C395.92 120.32 412.33 129.34 428.75 129.34 C445.17 129.34 461.58 125.24 478.00 125.24 C494.42 125.24 510.83 139.18 527.25 139.18 C543.67 139.18 560.08 138.36 576.50 138.36 C592.92 138.36 609.33 138.36 625.75 138.36 C642.17 138.36 658.58 139.59 675.00 140.82" fill="none" stroke="#1d4ed8" stroke-width="2" stroke-linecap="butt"/>
<path d="M84.00 340.08 C100.42 341.15 116.83 342.21 133.25 342.54 C149.67 342.87 166.08 343.03 182.50 343.03 C198.92 343.03 215.33 341.72 231.75 341.72 C248.17 341.72 264.58 342.05 281.00 342.05 C297.42 342.05 313.83 341.72 330.25 341.72 C346.67 341.72 363.08 341.72 379.50 341.72 C395.92 341.72 412.33 342.54 428.75 342.54 C445.17 342.54 461.58 342.54 478.00 342.54 C494.42 342.54 510.83 341.72 527.25 341.72 C543.67 341.72 560.08 342.54 576.50 342.54 C592.92 342.54 609.33 341.72 625.75 341.72 C642.17 341.72 658.58 342.13 675.00 342.54" fill="none" stroke="#15803d" stroke-width="2" stroke-linecap="butt"/>
<line x1="84" y1="345.5" x2="675" y2="345.5" stroke="#e0e0e0" stroke-width="1"/>
<line x1="84.0" y1="346" x2="84.0" y2="351" stroke="#e0e0e0" stroke-width="1"/>
<line x1="133.2" y1="346" x2="133.2" y2="351" stroke="#e0e0e0" stroke-width="1"/>
<line x1="182.5" y1="346" x2="182.5" y2="351" stroke="#e0e0e0" stroke-width="1"/>
<line x1="231.8" y1="346" x2="231.8" y2="351" stroke="#e0e0e0" stroke-width="1"/>
<line x1="281.0" y1="346" x2="281.0" y2="351" stroke="#e0e0e0" stroke-width="1"/>
<line x1="330.2" y1="346" x2="330.2" y2="351" stroke="#e0e0e0" stroke-width="1"/>
<line x1="379.5" y1="346" x2="379.5" y2="351" stroke="#e0e0e0" stroke-width="1"/>
<line x1="428.8" y1="346" x2="428.8" y2="351" stroke="#e0e0e0" stroke-width="1"/>
<line x1="478.0" y1="346" x2="478.0" y2="351" stroke="#e0e0e0" stroke-width="1"/>
<line x1="527.2" y1="346" x2="527.2" y2="351" stroke="#e0e0e0" stroke-width="1"/>
<line x1="576.5" y1="346" x2="576.5" y2="351" stroke="#e0e0e0" stroke-width="1"/>
<line x1="625.8" y1="346" x2="625.8" y2="351" stroke="#e0e0e0" stroke-width="1"/>
<line x1="675.0" y1="346" x2="675.0" y2="351" stroke="#e0e0e0" stroke-width="1"/>
<text class="yl" x="74" y="103.0" text-anchor="end" font-size="11" fill="#373d3f">15000</text>
<text class="yl" x="74" y="185.0" text-anchor="end" font-size="11" fill="#373d3f">10000</text>
<text class="yl" x="74" y="267.0" text-anchor="end" font-size="11" fill="#373d3f">5000</text>
<text class="yl" x="74" y="349.0" text-anchor="end" font-size="11" fill="#373d3f">0</text>
<g clip-path="url(#clb)">
<text class="xl" transform="translate(87.3 357) rotate(-45)" text-anchor="end" font-size="11.6" fill="#373d3f">01.04.26 г., 13:50</text>
<text class="xl" transform="translate(136.6 357) rotate(-45)" text-anchor="end" font-size="11.6" fill="#373d3f">01.04.26 г., 13:55</text>
<text class="xl" transform="translate(185.8 357) rotate(-45)" text-anchor="end" font-size="11.6" fill="#373d3f">01.04.26 г., 14:00</text>
<text class="xl" transform="translate(235.1 357) rotate(-45)" text-anchor="end" font-size="11.6" fill="#373d3f">01.04.26 г., 14:05</text>
<text class="xl" transform="translate(284.3 357) rotate(-45)" text-anchor="end" font-size="11.6" fill="#373d3f">01.04.26 г., 14:10</text>
<text class="xl" transform="translate(333.6 357) rotate(-45)" text-anchor="end" font-size="11.6" fill="#373d3f">01.04.26 г., 14:15</text>
<text class="xl" transform="translate(382.8 357) rotate(-45)" text-anchor="end" font-size="11.6" fill="#373d3f">01.04.26 г., 14:20</text>
<text class="xl" transform="translate(432.1 357) rotate(-45)" text-anchor="end" font-size="11.6" fill="#373d3f">01.04.26 г., 14:25</text>
<text class="xl" transform="translate(481.3 357) rotate(-45)" text-anchor="end" font-size="11.6" fill="#373d3f">01.04.26 г., 14:30</text>
<text class="xl" transform="translate(530.5 357) rotate(-45)" text-anchor="end" font-size="11.6" fill="#373d3f">01.04.26 г., 14:35</text>
<text class="xl" transform="translate(579.8 357) rotate(-45)" text-anchor="end" font-size="11.6" fill="#373d3f">01.04.26 г., 14:40</text>
<text class="xl" transform="translate(629.0 357) rotate(-45)" text-anchor="end" font-size="11.6" fill="#373d3f">01.04.26 г., 14:45</text>
<text class="xl" transform="translate(678.3 357) rotate(-45)" text-anchor="end" font-size="11.6" fill="#373d3f">01.04.26 г., 14:50</text>
</g>
<circle cx="249.8" cy="467.6" r="6.6" fill="#1d4ed8"/>
<circle cx="362.9" cy="467.6" r="6.6" fill="#15803d"/>
</svg></div>

  <!-- footer -->
<div class="hdiv" style="left:0;top:1032px;width:1492px"></div>

</div>

<div id="texts">
<span class="t" style="left:115.84px;top:32.1px;font-size:17.6px;color:#0f172a;letter-spacing:-0.764px;transform:scaleX(0.9113);-webkit-text-stroke:0.2px #0f172a;">DP</span>
<span class="t" style="left:161.36px;top:30.99px;font-size:16.2px;color:#0f172a;letter-spacing:0.268px;transform:scaleX(1.0387);-webkit-text-stroke:0.7px #0f172a;">Demo Project</span>
<span class="t" style="left:23.0px;top:115.54px;font-size:12px;color:#475569;letter-spacing:0.233px;transform:scaleX(1.0047);">МЕНЮ</span>
<span class="t" style="left:23.4px;top:701.74px;font-size:12px;color:#475569;letter-spacing:0.139px;transform:scaleX(1.0094);">ДРУГИ</span>
<span class="t" style="left:14.55px;top:827.74px;font-size:12px;color:#475569;letter-spacing:0.353px;transform:scaleX(1.0499);">ВЪНШНИ</span>
<span class="t" style="left:111.72px;top:105.64px;font-size:12px;color:#475569;letter-spacing:0.207px;transform:scaleX(1.002);">ОСНОВНИ</span>
<span class="t" style="left:139.72px;top:146.12px;font-size:13.8px;color:#334155;letter-spacing:0.434px;transform:scaleX(1.0778);-webkit-text-stroke:0.2px #334155;">Главно табло</span>
<span class="t" style="left:139.95px;top:190.12px;font-size:13.8px;color:#334155;letter-spacing:0.35px;transform:scaleX(1.0481);-webkit-text-stroke:0.2px #334155;">Членове</span>
<span class="t" style="left:140.64px;top:234.12px;font-size:13.8px;color:#0f172a;letter-spacing:0.421px;transform:scaleX(1.052);-webkit-text-stroke:0.2px #0f172a;">Услуги</span>
<span class="t" style="left:139.47px;top:278.12px;font-size:13.8px;color:#334155;letter-spacing:0.97px;transform:scaleX(1.16);-webkit-text-stroke:0.2px #334155;">Фактури</span>
<span class="t" style="left:140.12px;top:322.12px;font-size:13.8px;color:#334155;letter-spacing:0.656px;transform:scaleX(1.1209);-webkit-text-stroke:0.2px #334155;">Запитвания</span>
<span class="t" style="left:139.87px;top:366.12px;font-size:13.8px;color:#334155;letter-spacing:0.703px;transform:scaleX(1.1333);-webkit-text-stroke:0.2px #334155;">Настройки</span>
<span class="t" style="left:457.91px;top:31.76px;font-size:16px;color:#0f172a;letter-spacing:0.558px;transform:scaleX(1.0932);-webkit-text-stroke:0.7px #0f172a;">demo-cloud-vps-1</span>
<span class="t" style="left:1462.56px;top:32.15px;font-size:14px;color:#ffffff;letter-spacing:0.269px;transform:scaleX(1.0421);-webkit-text-stroke:0.25px #ffffff;">Нова поръчка</span>
<span class="t" style="left:1647.96px;top:32.15px;font-size:14px;color:#1e293b;letter-spacing:0.216px;transform:scaleX(1.0432);-webkit-text-stroke:0.25px #1e293b;">Количка</span>
<span class="t" style="left:400.15px;top:96.94px;font-size:14.6px;color:#475569;letter-spacing:0.601px;transform:scaleX(1.1011);">Общ преглед</span>
<span class="t" style="left:529.22px;top:96.94px;font-size:14.6px;color:#475569;letter-spacing:0.551px;transform:scaleX(1.091);">Управление</span>
<span class="t" style="left:646.0px;top:96.94px;font-size:14.6px;color:#475569;letter-spacing:0.733px;transform:scaleX(1.1257);">Дискове</span>
<span class="t" style="left:736.93px;top:96.94px;font-size:14.6px;color:#475569;letter-spacing:0.614px;transform:scaleX(1.1111);">Мрежова конфигурация</span>
<span class="t" style="left:954.19px;top:96.94px;font-size:14.6px;color:#475569;letter-spacing:0.581px;transform:scaleX(1.087);">Конзола</span>
<span class="t" style="left:1042.56px;top:96.94px;font-size:14.6px;color:#475569;letter-spacing:1.256px;transform:scaleX(1.16);">Снапшоти</span>
<span class="t" style="left:1156.1px;top:96.94px;font-size:14.6px;color:#0f172a;letter-spacing:0.544px;transform:scaleX(1.1006);-webkit-text-stroke:0.5px #0f172a;">Графики</span>
<span class="t" style="left:1247.18px;top:96.94px;font-size:14.6px;color:#475569;letter-spacing:0.588px;transform:scaleX(1.1004);">Преоразмеряване</span>
<span class="t" style="left:1416.31px;top:96.94px;font-size:14.6px;color:#475569;letter-spacing:0.696px;transform:scaleX(1.127);">Преинсталиране</span>
<span class="t" style="left:1629.26px;top:96.94px;font-size:14.6px;color:#475569;letter-spacing:0.737px;transform:scaleX(1.1427);">Ново запитване</span>
<span class="t" style="left:399.73px;top:158.46px;font-size:16.7px;color:#0f172a;letter-spacing:0.574px;transform:scaleX(1.0704);-webkit-text-stroke:0.5px #0f172a;">Графики</span>
<span class="t" style="left:400.63px;top:185.09px;font-size:13.6px;color:#475569;letter-spacing:0.531px;transform:scaleX(1.1215);">Това са графиките, които показват статистика за използването на ресурсите на сървъра.</span>
<span class="t" style="left:620.83px;top:242.6px;font-size:13.0px;color:#334155;letter-spacing:0.797px;transform:scaleX(1.085);-webkit-text-stroke:0.25px #334155;">Общи</span>
<span class="t" style="left:1092.0px;top:242.6px;font-size:13.0px;color:#334155;letter-spacing:0.715px;transform:scaleX(1.1067);-webkit-text-stroke:0.25px #334155;">Дискове</span>
<span class="t" style="left:1577.68px;top:242.6px;font-size:13.0px;color:#94a3b8;letter-spacing:0.943px;transform:scaleX(1.1239);-webkit-text-stroke:0.25px #94a3b8;">Мрежи</span>
<span class="t" style="left:578.55px;top:312.9px;font-size:13.0px;color:#94a3b8;letter-spacing:0.44px;transform:scaleX(1.0867);-webkit-text-stroke:0.25px #94a3b8;">За последния час</span>
<span class="t" style="left:1043.14px;top:312.9px;font-size:13.0px;color:#334155;letter-spacing:0.557px;transform:scaleX(1.1114);-webkit-text-stroke:0.25px #334155;">За последните 6 часа</span>
<span class="t" style="left:1520.74px;top:312.9px;font-size:13.0px;color:#334155;letter-spacing:0.507px;transform:scaleX(1.1043);-webkit-text-stroke:0.25px #334155;">За последните 12 часа</span>
<span class="t" style="left:577.94px;top:357.9px;font-size:13.0px;color:#334155;letter-spacing:0.449px;transform:scaleX(1.0885);-webkit-text-stroke:0.25px #334155;">За последния ден</span>
<span class="t" style="left:1035.14px;top:357.9px;font-size:13.0px;color:#334155;letter-spacing:0.568px;transform:scaleX(1.1094);-webkit-text-stroke:0.25px #334155;">За последната седмица</span>
<span class="t" style="left:1531.15px;top:357.9px;font-size:13.0px;color:#334155;letter-spacing:0.444px;transform:scaleX(1.0875);-webkit-text-stroke:0.25px #334155;">За последния месец</span>
<span class="t" style="left:451.66px;top:429.92px;font-size:16.4px;color:#1d4ed8;letter-spacing:0.353px;transform:scaleX(1.0646);">Изобразените графики не се генерират директно от Вашия виртуален сървър. Поради тази причина техните стойности може да не са напълно точни.</span>
<span class="t" style="left:424.9px;top:521.66px;font-size:16.7px;color:#0f172a;letter-spacing:0.718px;transform:scaleX(1.1285);-webkit-text-stroke:0.25px #0f172a;">Мрежова пропускателна способност (tapfc92cf11-37)</span>
<span class="t" style="left:1158.1px;top:521.66px;font-size:16.7px;color:#0f172a;letter-spacing:0.706px;transform:scaleX(1.1303);-webkit-text-stroke:0.25px #0f172a;">Мрежови пакети (tapfc92cf11-37)</span>
<span class="t" style="left:665.77px;top:949.98px;font-size:14.2px;color:#373d3f;letter-spacing:0.167px;transform:scaleX(1.0285);">Входяща(и)</span>
<span class="t" style="left:778.57px;top:949.98px;font-size:14.2px;color:#373d3f;letter-spacing:0.253px;transform:scaleX(1.0336);">Изходяща(и)</span>
<span class="t" style="left:1399.77px;top:949.98px;font-size:14.2px;color:#373d3f;letter-spacing:0.167px;transform:scaleX(1.0285);">Входяща(и)</span>
<span class="t" style="left:1512.57px;top:949.98px;font-size:14.2px;color:#373d3f;letter-spacing:0.253px;transform:scaleX(1.0336);">Изходяща(и)</span>
<span class="t" style="left:392.37px;top:1050.5px;font-size:12.4px;color:#475569;letter-spacing:0.203px;transform:scaleX(1.0482);">© 2026 Всички права запазени.</span>
<span class="t" style="left:1380.8px;top:1050.5px;font-size:12.4px;color:#475569;letter-spacing:0.165px;transform:scaleX(1.0433);">Общи условия</span>
<span class="t" style="left:1485.91px;top:1050.5px;font-size:12.4px;color:#475569;letter-spacing:0.401px;transform:scaleX(1.0942);">Политика за &quot;бисквитки&quot;</span>
<span class="t" style="left:1663.1px;top:1050.5px;font-size:12.4px;color:#475569;letter-spacing:0.451px;transform:scaleX(1.1008);">Политика за поверителност</span>
</div>
</body>
</html>
